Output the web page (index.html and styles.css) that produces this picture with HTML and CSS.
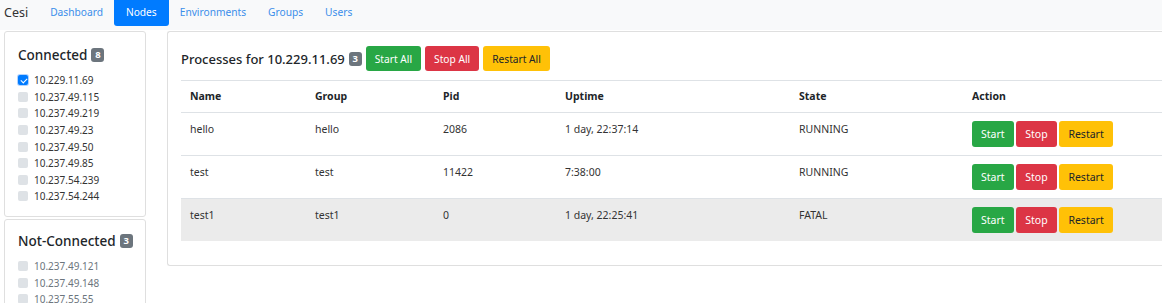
FILE: index.html
```html
<!DOCTYPE html>
<html lang="en">
<head>
  <meta charset="UTF-8">
  <meta name="viewport" content="width=device-width, initial-scale=1.0">
  <title>Cesi - Nodes</title>
  <link rel="stylesheet" href="styles.css">
</head>
<body>
  <nav class="navbar">
    <span class="brand">Cesi</span>
    <a class="nav-link" href="#">Dashboard</a>
    <a class="nav-link active" href="#">Nodes</a>
    <a class="nav-link" href="#">Environments</a>
    <a class="nav-link" href="#">Groups</a>
    <a class="nav-link" href="#">Users</a>
  </nav>

  <div class="page">
    <aside class="sidebar">
      <div class="card side-card">
        <h4 class="side-title">Connected <span class="badge">8</span></h4>
        <ul class="node-list">
          <li><span class="check checked"></span>10.229.11.69</li>
          <li><span class="check"></span>10.237.49.115</li>
          <li><span class="check"></span>10.237.49.219</li>
          <li><span class="check"></span>10.237.49.23</li>
          <li><span class="check"></span>10.237.49.50</li>
          <li><span class="check"></span>10.237.49.85</li>
          <li><span class="check"></span>10.237.54.239</li>
          <li><span class="check"></span>10.237.54.244</li>
        </ul>
      </div>
      <div class="card side-card">
        <h4 class="side-title">Not-Connected <span class="badge">3</span></h4>
        <ul class="node-list disabled">
          <li><span class="check"></span>10.237.49.121</li>
          <li><span class="check"></span>10.237.49.148</li>
          <li><span class="check"></span>10.237.55.55</li>
        </ul>
      </div>
    </aside>

    <main class="card main-card">
      <div class="proc-header">
        <h3 class="proc-title">Processes for 10.229.11.69 <span class="badge">3</span></h3>
        <button class="btn btn-success">Start All</button>
        <button class="btn btn-danger">Stop All</button>
        <button class="btn btn-warning">Restart All</button>
      </div>

      <table class="proc-table">
        <thead>
          <tr>
            <th class="c-name">Name</th>
            <th class="c-group">Group</th>
            <th class="c-pid">Pid</th>
            <th class="c-uptime">Uptime</th>
            <th class="c-state">State</th>
            <th>Action</th>
          </tr>
        </thead>
        <tbody>
          <tr>
            <td>hello</td>
            <td>hello</td>
            <td>2086</td>
            <td>1 day, 22:37:14</td>
            <td>RUNNING</td>
            <td class="actions">
              <button class="btn btn-success">Start</button>
              <button class="btn btn-danger">Stop</button>
              <button class="btn btn-warning">Restart</button>
            </td>
          </tr>
          <tr>
            <td>test</td>
            <td>test</td>
            <td>11422</td>
            <td>7:38:00</td>
            <td>RUNNING</td>
            <td class="actions">
              <button class="btn btn-success">Start</button>
              <button class="btn btn-danger">Stop</button>
              <button class="btn btn-warning">Restart</button>
            </td>
          </tr>
          <tr class="row-fatal">
            <td>test1</td>
            <td>test1</td>
            <td>0</td>
            <td>1 day, 22:25:41</td>
            <td>FATAL</td>
            <td class="actions">
              <button class="btn btn-success">Start</button>
              <button class="btn btn-danger">Stop</button>
              <button class="btn btn-warning">Restart</button>
            </td>
          </tr>
        </tbody>
      </table>
    </main>
  </div>
</body>
</html>
```

FILE: styles.css
```css
* { box-sizing: border-box; }

body {
  margin: 0;
  font-family: "Noto Sans", "Open Sans", Arial, sans-serif;
  font-size: 10.5px;
  color: #212529;
  background: #fff;
  overflow: hidden;
}

/* top nav */
.navbar {
  display: flex;
  align-items: stretch;
  height: 30px;
  padding: 0 4px;
  background: #f8f9fa;
}
.brand {
  font-size: 12.5px;
  color: #333;
  line-height: 26px;
  margin-right: 11px;
}
.nav-link {
  font-size: 10.2px;
  color: #3b8eea;
  text-decoration: none;
  padding: 0 11px;
  height: 26px;
  line-height: 25px;
  border-radius: 0 0 3px 3px;
  white-space: nowrap;
}
.nav-link.active {
  background: #007bff;
  color: #fff;
  padding: 0 12px;
}

.page {
  display: flex;
  align-items: flex-start;
  gap: 21px;
  padding: 1px 0 0 4px;
}

.card {
  background: #fff;
  border: 1px solid #dfdfdf;
  border-radius: 3px;
}

/* sidebar */
.sidebar {
  width: 142px;
  flex: none;
  display: flex;
  flex-direction: column;
  gap: 2px;
}
.side-card {
  padding: 13px 13px 11px;
}
.side-card + .side-card {
  padding-top: 11px;
}
.side-title {
  margin: 0 0 7px;
  font-size: 13.5px;
  font-weight: 500;
  line-height: 20px;
  display: flex;
  align-items: center;
  gap: 4px;
  white-space: nowrap;
}
.node-list {
  list-style: none;
  margin: 0;
  padding: 0;
}
.node-list li {
  display: flex;
  align-items: center;
  height: 16.6px;
  font-size: 10px;
  color: #333;
}
.node-list.disabled li {
  color: #6c757d;
}
.check {
  width: 10px;
  height: 10px;
  border-radius: 2px;
  background: #dee2e6;
  margin-right: 6px;
  flex: none;
  position: relative;
}
.check.checked {
  background: #007bff;
  box-shadow: 0 0 0 1px #b3d4ff;
}
.check.checked::after {
  content: "";
  position: absolute;
  left: 3.6px;
  top: 1.8px;
  width: 3px;
  height: 5px;
  border: solid #fff;
  border-width: 0 1.3px 1.3px 0;
  transform: rotate(45deg);
}

.badge {
  display: inline-block;
  background: #6c757d;
  color: #fff;
  font-size: 9.5px;
  font-weight: 700;
  line-height: 14px;
  min-width: 13px;
  text-align: center;
  border-radius: 3px;
}

/* main */
.main-card {
  width: 1010px;
  flex: none;
  padding: 14px 13px 24px;
  border-right: none;
}
.proc-header {
  display: flex;
  align-items: center;
  gap: 4px;
  margin-bottom: 9px;
}
.proc-title {
  margin: 0;
  font-size: 13px;
  font-weight: 500;
  display: flex;
  align-items: center;
  gap: 4px;
}

.btn {
  font-family: inherit;
  font-size: 10.2px;
  height: 25px;
  padding: 0 8px;
  border: 1px solid transparent;
  border-radius: 3px;
  cursor: pointer;
  white-space: nowrap;
}
.btn-success { background: #28a745; color: #fff; }
.btn-danger { background: #dc3545; color: #fff; }
.btn-warning { background: #ffc107; color: #212529; }

.proc-table {
  width: 100%;
  border-collapse: collapse;
  table-layout: fixed;
  color: #333;
}
.proc-table th,
.proc-table td {
  text-align: left;
  vertical-align: top;
  padding: 8px 9px;
  border-top: 1px solid #dee2e6;
  line-height: 16px;
}
.proc-table th {
  font-weight: 700;
  color: #212529;
  padding-top: 7px;
  padding-bottom: 8px;
}
.c-name { width: 125px; }
.c-group { width: 128px; }
.c-pid { width: 122px; }
.c-uptime { width: 234px; }
.c-state { width: 173px; }
.actions {
  white-space: nowrap;
}
.actions .btn {
  font-size: 10.5px;
  height: 26px;
  padding: 0 8px;
}
.row-fatal td {
  background: #ebebeb;
}
```
